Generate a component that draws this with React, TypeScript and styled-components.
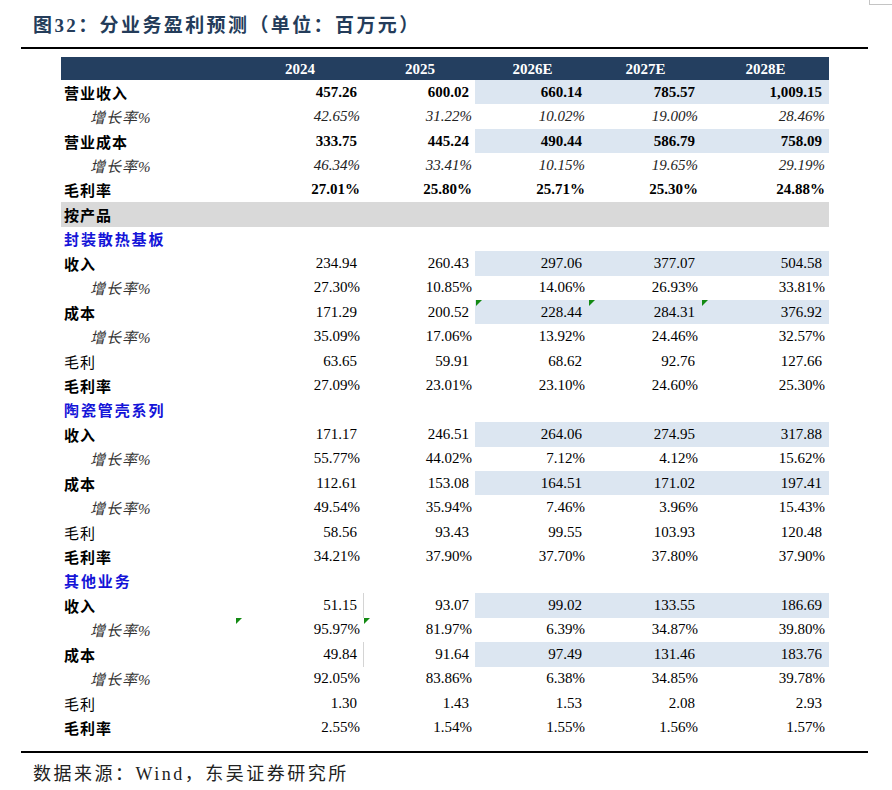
import React from "react";
import styled, { createGlobalStyle, css } from "styled-components";

const Global = createGlobalStyle`
  html, body { margin: 0; padding: 0; background: #ffffff; }
  body { font-family: "Liberation Serif", "Noto Sans CJK SC", serif; color: #000; }
`;

const FONT = `"Liberation Serif", "Noto Sans CJK SC", serif`;
const GRID = "175px 128px 112px 113px 113px 127px";

const Page = styled.div`
  position: relative;
  width: 892px;
  height: 790px;
  overflow: hidden;
  background: #fff;
  padding-top: 13px;
  box-sizing: border-box;
`;

const CornerBox = styled.div`
  position: absolute;
  top: -20px;
  left: 869px;
  width: 40px;
  height: 23px;
  border: 1px solid #c4c4c4;
`;

const Title = styled.h1`
  margin: 0 0 0 33px;
  font-family: ${FONT};
  font-size: 19px;
  line-height: 26px;
  font-weight: 700;
  letter-spacing: 2.4px;
  color: #243c5a;
`;

const Rule = styled.div<{ $top: number }>`
  margin-left: 21px;
  margin-top: ${(p) => p.$top}px;
  width: 847px;
  height: 2px;
  background: #000;
`;

const Table = styled.div`
  margin-left: 61px;
  margin-top: 8px;
  width: 768px;
  font-family: ${FONT};
  font-size: 15px;
`;

const HeaderRow = styled.div`
  display: grid;
  grid-template-columns: ${GRID};
  height: 23px;
  background: #243f60;
  color: #fff;
  font-weight: 700;
`;

const HeaderCell = styled.div`
  display: flex;
  align-items: center;
  justify-content: center;
  padding-top: 1px;
`;

const Row = styled.div<{ $band?: boolean }>`
  display: grid;
  grid-template-columns: ${GRID};
  height: 24.44px;
  background: ${(p) => (p.$band ? "#d9d9d9" : "transparent")};
`;

type LabelKind = "main" | "growth" | "plain" | "section" | "band";

const LabelCell = styled.div<{ $kind: LabelKind }>`
  display: flex;
  align-items: center;
  white-space: nowrap;
  letter-spacing: 1px;
  padding-left: ${(p) => (p.$kind === "growth" ? "29px" : "3px")};
  font-weight: ${(p) =>
    p.$kind === "main" || p.$kind === "section" || p.$kind === "band" ? 700 : 400};
  font-style: ${(p) => (p.$kind === "growth" ? "italic" : "normal")};
  color: ${(p) => (p.$kind === "section" ? "#1414d8" : p.$kind === "growth" ? "#333" : "#000")};
  ${(p) => p.$kind === "section" && css`letter-spacing: 1.9px;`}
  ${(p) => p.$kind === "band" && css`grid-column: 1 / -1;`}
`;

const ValueCell = styled.div<{
  $hl?: boolean;
  $bold?: boolean;
  $italic?: boolean;
  $pct?: boolean;
  $divider?: boolean;
  $marker?: boolean;
}>`
  position: relative;
  display: flex;
  align-items: center;
  justify-content: flex-end;
  padding-right: ${(p) => (p.$pct ? "4px" : "7px")};
  background: ${(p) => (p.$hl ? "#dce6f1" : "transparent")};
  font-weight: ${(p) => (p.$bold ? 700 : 400)};
  font-style: ${(p) => (p.$italic ? "italic" : "normal")};
  color: ${(p) => (p.$italic ? "#222" : "#000")};
  border-left: 1px solid ${(p) => (p.$divider ? "#d4d4d4" : "transparent")};
  margin-left: -1px;
  ${(p) =>
    p.$marker &&
    css`
      &::before {
        content: "";
        position: absolute;
        left: 0;
        top: 0;
        width: 0;
        height: 0;
        border-top: 6px solid #138a13;
        border-right: 6px solid transparent;
      }
    `}
`;

const Footer = styled.div`
  margin: 6px 0 0 33px;
  font-family: ${FONT};
  font-size: 18px;
  letter-spacing: 2.5px;
  color: #222;
`;

type RowKind = "top" | "topGrowth" | "topRate" | "band" | "section" | "main" | "growth" | "plain" | "rate";

interface RowData {
  kind: RowKind;
  label: string;
  v?: string[];
  hl?: boolean;
  markers?: number[];
  divider?: boolean;
}

const years = ["2024", "2025", "2026E", "2027E", "2028E"];

const section = (
  name: string,
  rev: string[],
  revG: string[],
  cost: string[],
  costG: string[],
  gp: string[],
  gm: string[],
  extra: { costMarkers?: number[]; growthMarkers?: number[]; divider?: boolean } = {}
): RowData[] => [
  { kind: "section", label: name },
  { kind: "main", label: "收入", v: rev, hl: true, divider: extra.divider },
  { kind: "growth", label: "增长率%", v: revG, markers: extra.growthMarkers },
  { kind: "main", label: "成本", v: cost, hl: true, markers: extra.costMarkers, divider: extra.divider },
  { kind: "growth", label: "增长率%", v: costG },
  { kind: "plain", label: "毛利", v: gp },
  { kind: "rate", label: "毛利率", v: gm },
];

const rows: RowData[] = [
  { kind: "top", label: "营业收入", v: ["457.26", "600.02", "660.14", "785.57", "1,009.15"], hl: true },
  { kind: "topGrowth", label: "增长率%", v: ["42.65%", "31.22%", "10.02%", "19.00%", "28.46%"] },
  { kind: "top", label: "营业成本", v: ["333.75", "445.24", "490.44", "586.79", "758.09"], hl: true },
  { kind: "topGrowth", label: "增长率%", v: ["46.34%", "33.41%", "10.15%", "19.65%", "29.19%"] },
  { kind: "topRate", label: "毛利率", v: ["27.01%", "25.80%", "25.71%", "25.30%", "24.88%"] },
  { kind: "band", label: "按产品" },
  ...section(
    "封装散热基板",
    ["234.94", "260.43", "297.06", "377.07", "504.58"],
    ["27.30%", "10.85%", "14.06%", "26.93%", "33.81%"],
    ["171.29", "200.52", "228.44", "284.31", "376.92"],
    ["35.09%", "17.06%", "13.92%", "24.46%", "32.57%"],
    ["63.65", "59.91", "68.62", "92.76", "127.66"],
    ["27.09%", "23.01%", "23.10%", "24.60%", "25.30%"],
    { costMarkers: [2, 3, 4] }
  ),
  ...section(
    "陶瓷管壳系列",
    ["171.17", "246.51", "264.06", "274.95", "317.88"],
    ["55.77%", "44.02%", "7.12%", "4.12%", "15.62%"],
    ["112.61", "153.08", "164.51", "171.02", "197.41"],
    ["49.54%", "35.94%", "7.46%", "3.96%", "15.43%"],
    ["58.56", "93.43", "99.55", "103.93", "120.48"],
    ["34.21%", "37.90%", "37.70%", "37.80%", "37.90%"]
  ),
  ...section(
    "其他业务",
    ["51.15", "93.07", "99.02", "133.55", "186.69"],
    ["95.97%", "81.97%", "6.39%", "34.87%", "39.80%"],
    ["49.84", "91.64", "97.49", "131.46", "183.76"],
    ["92.05%", "83.86%", "6.38%", "34.85%", "39.78%"],
    ["1.30", "1.43", "1.53", "2.08", "2.93"],
    ["2.55%", "1.54%", "1.55%", "1.56%", "1.57%"],
    { growthMarkers: [0, 1], divider: true }
  ),
];

const labelKind = (k: RowKind): LabelKind => {
  switch (k) {
    case "top":
    case "topRate":
    case "main":
    case "rate":
      return "main";
    case "topGrowth":
    case "growth":
      return "growth";
    case "band":
      return "band";
    case "section":
      return "section";
    default:
      return "plain";
  }
};

export default function App() {
  return (
    <Page>
      <Global />
      <CornerBox />
      <Title>图32：分业务盈利预测（单位：百万元）</Title>
      <Rule $top={8} />
      <Table>
        <HeaderRow>
          <HeaderCell />
          {years.map((y) => (
            <HeaderCell key={y}>{y}</HeaderCell>
          ))}
        </HeaderRow>
        {rows.map((r, i) => (
          <Row key={i} $band={r.kind === "band"}>
            <LabelCell $kind={labelKind(r.kind)}>{r.label}</LabelCell>
            {r.v &&
              r.v.map((val, j) => (
                <ValueCell
                  key={j}
                  $hl={r.hl && j >= 2}
                  $bold={r.kind === "top" || r.kind === "topRate"}
                  $italic={r.kind === "topGrowth"}
                  $pct={val.endsWith("%")}
                  $divider={r.divider && j === 1}
                  $marker={r.markers?.includes(j)}
                >
                  {val}
                </ValueCell>
              ))}
          </Row>
        ))}
      </Table>
      <Rule $top={11} />
      <Footer>数据来源：Wind，东吴证券研究所</Footer>
    </Page>
  );
}
